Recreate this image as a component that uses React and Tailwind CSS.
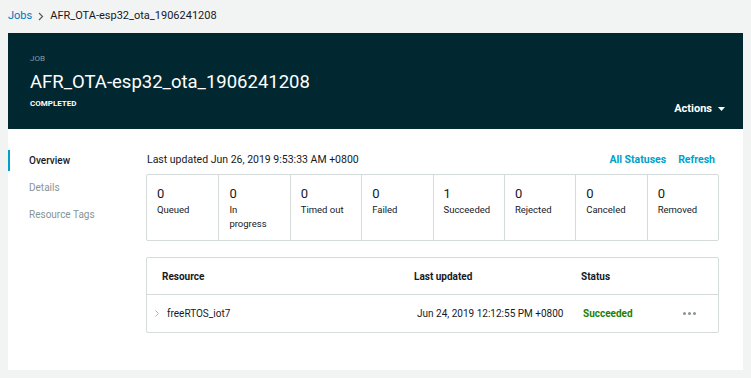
import React from 'react';

const stats = [
  { value: 0, label: 'Queued' },
  { value: 0, label: 'In\nprogress' },
  { value: 0, label: 'Timed out' },
  { value: 0, label: 'Failed' },
  { value: 1, label: 'Succeeded' },
  { value: 0, label: 'Rejected' },
  { value: 0, label: 'Canceled' },
  { value: 0, label: 'Removed' },
];

const navItems = ['Overview', 'Details', 'Resource Tags'];

const App = () => {
  return (
    <div className="min-h-[378px] w-[751px] bg-[#f2f3f3] pr-[8px] pl-[8px] text-[#16191f]" style={{ fontFamily: 'Roboto, "Liberation Sans", sans-serif' }}>
      <div className="flex h-[33px] items-center gap-[6px] text-[11px]">
        <a className="text-[#0073bb]">Jobs</a>
        <svg width="6" height="9" viewBox="0 0 6 9"><path d="M1 1l3.5 3.5L1 8" fill="none" stroke="#545b64" strokeWidth="1.2" /></svg>
        <span className="text-[#16191f]">AFR_OTA-esp32_ota_1906241208</span>
      </div>

      <div className="flex h-[96px] w-[735px] justify-between bg-[#012831] pl-[22px] pr-[18px] pt-[22px] pb-[12px]">
        <div>
          <div className="text-[8px] uppercase leading-none text-[#8b9aa0]">Job</div>
          <div className="mt-[6px] text-[18.5px] leading-[26px] text-white">AFR_OTA-esp32_ota_1906241208</div>
          <div className="mt-[3px] text-[8px] font-bold uppercase text-white">Completed</div>
        </div>
        <div className="flex items-center gap-[6px] self-end text-[11px] font-bold text-white">
          Actions
          <svg width="7" height="4" viewBox="0 0 7 4"><path d="M0 0h7L3.5 4z" fill="#fff" /></svg>
        </div>
      </div>

      <div className="flex h-[241px] w-[735px] bg-white pt-[21px]">
        <div className="w-[138px] shrink-0">
          {navItems.map((item, i) => (
            <div key={item} className={`mb-[6px] flex h-[21px] items-center text-[10px] ${i === 0 ? 'border-l-[2px] border-[#00a1c9] pl-[19px] font-medium text-[#16191f]' : 'pl-[21px] text-[#879596]'}`}>
              {item}
            </div>
          ))}
        </div>

        <div className="w-[573px]">
          <div className="flex h-[20px] items-center justify-between text-[10.5px]">
            <span className="pl-[1px] text-[#16191f]">Last updated Jun 26, 2019 9:53:33 AM +0800</span>
            <div className="flex gap-[12px] pr-[4px] font-bold text-[#00a1c9]">
              <span>All Statuses</span>
              <span>Refresh</span>
            </div>
          </div>

          <div className="mt-[4px] grid h-[67px] grid-cols-8 rounded-[2px] border border-[#d5dbdb]">
            {stats.map((s, i) => (
              <div key={s.label} className={`pl-[10px] pr-[8px] pt-[10px] ${i > 0 ? 'border-l border-[#d5dbdb]' : ''}`}>
                <div className="text-[13px] leading-[18px] text-[#16191f]">{s.value}</div>
                <div className="whitespace-pre-line text-[9.5px] leading-[14px] text-[#16191f]">{s.label}</div>
              </div>
            ))}
          </div>

          <div className="mt-[16px] rounded-[2px] border border-[#d5dbdb]">
            <div className="flex h-[37px] items-center border-b border-[#d5dbdb] text-[10px] font-bold text-[#16191f]">
              <div className="w-[267px] pl-[15px]">Resource</div>
              <div className="w-[167px]">Last updated</div>
              <div>Status</div>
            </div>
            <div className="flex h-[37px] items-center text-[10px]">
              <div className="flex w-[267px] items-center pl-[7px]">
                <svg width="6" height="9" viewBox="0 0 6 9" className="mr-[7px]"><path d="M1.5 1.5l3 3-3 3" fill="none" stroke="#aab7b8" strokeWidth="1" /></svg>
                <span className="text-[#16191f]">freeRTOS_iot7</span>
              </div>
              <div className="w-[169px] pl-[3px] text-[#16191f]">Jun 24, 2019 12:12:55 PM +0800</div>
              <div className="w-[100px] font-bold text-[#1d8102]">Succeeded</div>
              <div className="flex gap-[2px]">
                <span className="h-[3px] w-[3px] rounded-full bg-[#879596]" />
                <span className="h-[3px] w-[3px] rounded-full bg-[#879596]" />
                <span className="h-[3px] w-[3px] rounded-full bg-[#879596]" />
              </div>
            </div>
          </div>
        </div>
      </div>
    </div>
  );
};

export default App;
